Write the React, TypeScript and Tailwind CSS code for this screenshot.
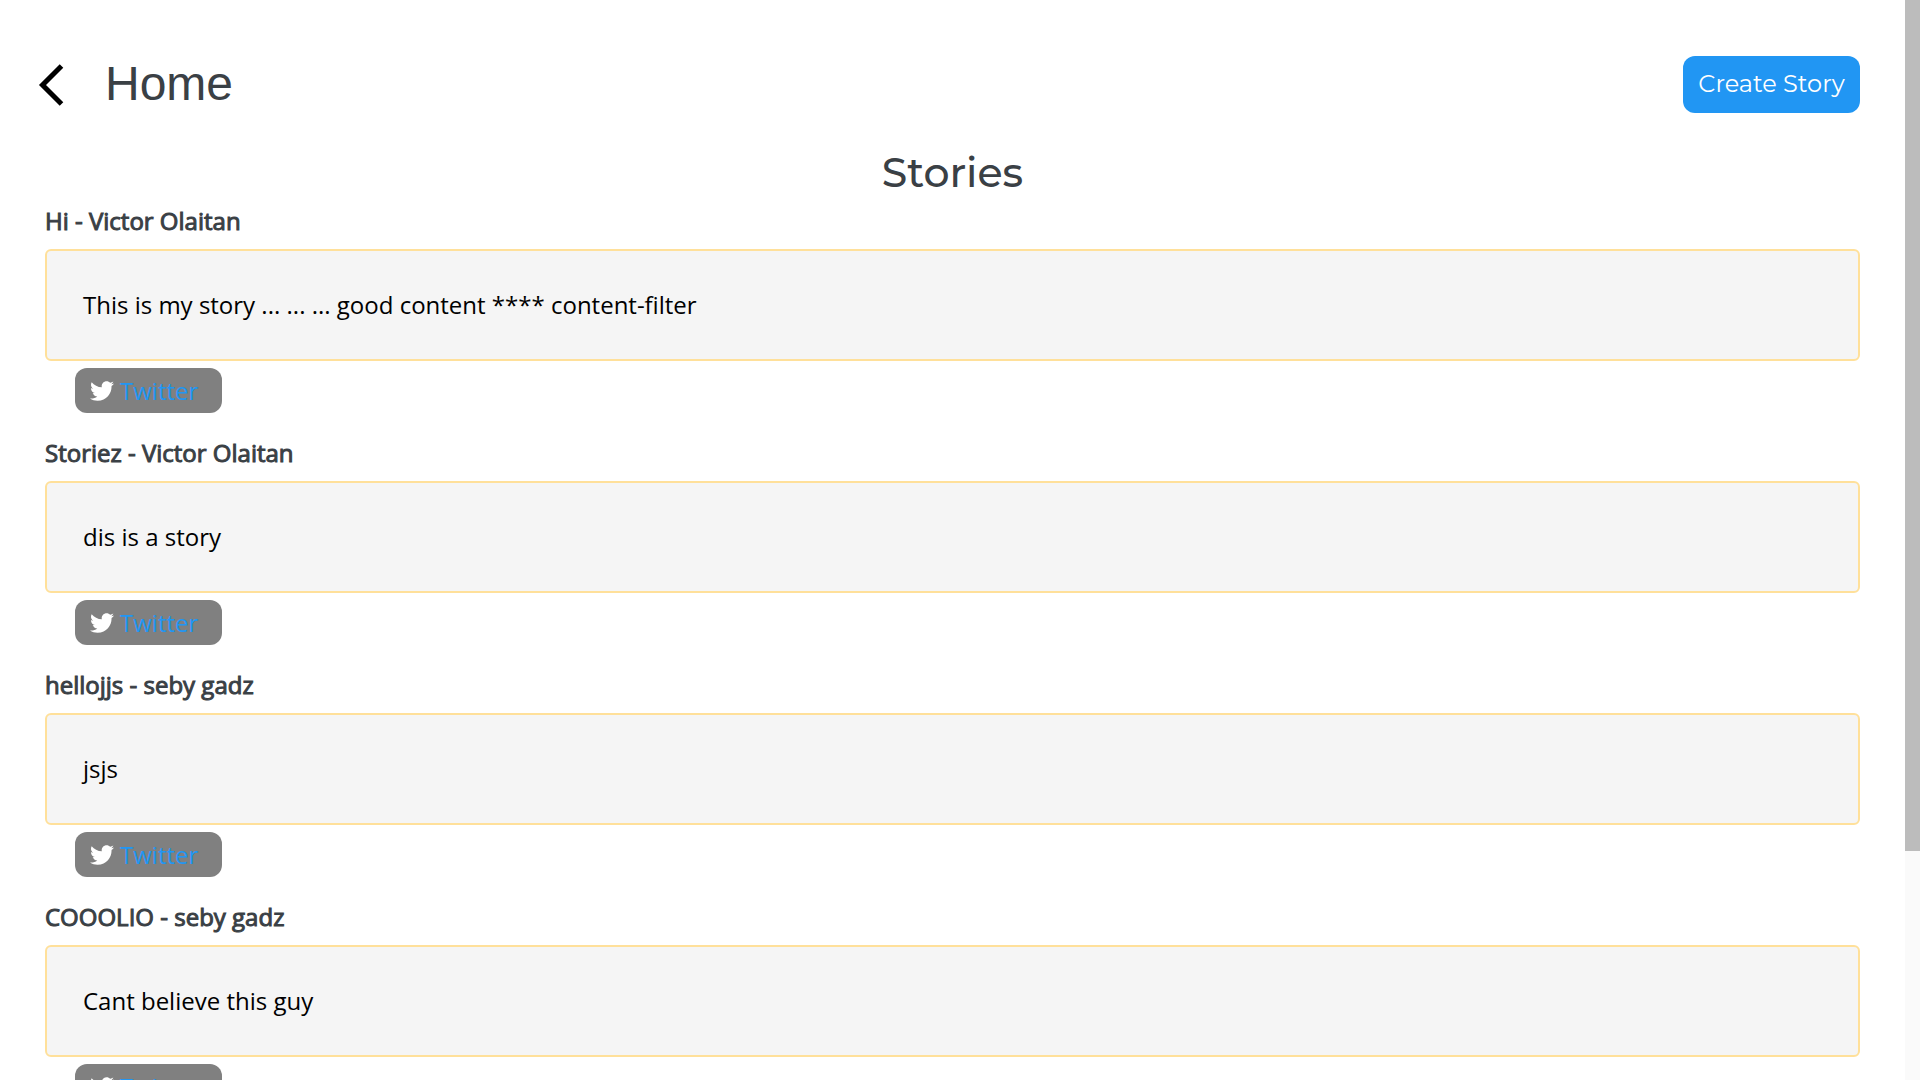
import React from 'react';
import { FaTwitter } from 'react-icons/fa';

const stories = [
  { title: 'Hi', author: 'Victor Olaitan', body: 'This is my story ... ... ... good content **** content-filter' },
  { title: 'Storiez', author: 'Victor Olaitan', body: 'dis is a story' },
  { title: 'hellojjs', author: 'seby gadz', body: 'jsjs' },
  { title: 'COOOLIO', author: 'seby gadz', body: 'Cant believe this guy' },
];

type Story = (typeof stories)[number];

function StoryItem({ story }: { story: Story }) {
  return (
    <article className="mb-6">
      <h2 className="mb-3 text-2xl leading-8 font-normal text-[#3a4045] [-webkit-text-stroke:1px_#3a4045]">
        {story.title} - {story.author}
      </h2>
      <div className="rounded-md border-2 border-[#ffe09a] bg-[#f5f5f5] px-9 py-[38px]">
        <p className="text-2xl leading-8 text-black">{story.body}</p>
      </div>
      <a
        href="#twitter"
        className="mt-[7px] ml-[30px] flex h-[45px] w-[147px] items-center gap-1.5 rounded-xl bg-[#808080] pl-[15px] text-2xl text-[#2196f3]"
      >
        <FaTwitter className="text-white" />
        Twitter
      </a>
    </article>
  );
}

export default function App() {
  return (
    <div className="flex h-screen overflow-hidden bg-white font-['Open_Sans',sans-serif]">
      <div className="min-w-0 flex-1 overflow-hidden px-[45px]">
        <header className="flex items-center justify-between pt-14">
          <a href="#home" className="-ml-2 flex items-center gap-10 text-[#3a4045]">
            <svg viewBox="0 0 28 42" className="h-[42px] w-7" fill="none" stroke="#000" strokeWidth="5">
              <path d="M24.5 2 L5.5 21 L24.5 40" />
            </svg>
            <span className="pb-0.5 font-['Liberation_Sans',sans-serif] text-5xl">Home</span>
          </a>
          <button
            type="button"
            className="h-[57px] w-[177px] rounded-xl bg-[#2196f3] pb-0.5 font-['Montserrat','Inter',sans-serif] text-2xl text-white"
          >
            Create Story
          </button>
        </header>

        <main>
          <h1 className="mt-8 mb-1.5 text-center font-['Montserrat','Inter',sans-serif] text-[41px] leading-[54px] font-medium text-[#3a4045]">
            Stories
          </h1>
          {stories.map((story) => (
            <StoryItem key={story.title} story={story} />
          ))}
        </main>
      </div>

      {/* Scroll track */}
      <div className="w-[15px] shrink-0 bg-[#fafafa]">
        <div className="h-[78.8%] bg-[#bcbcbc]" />
      </div>
    </div>
  );
}
